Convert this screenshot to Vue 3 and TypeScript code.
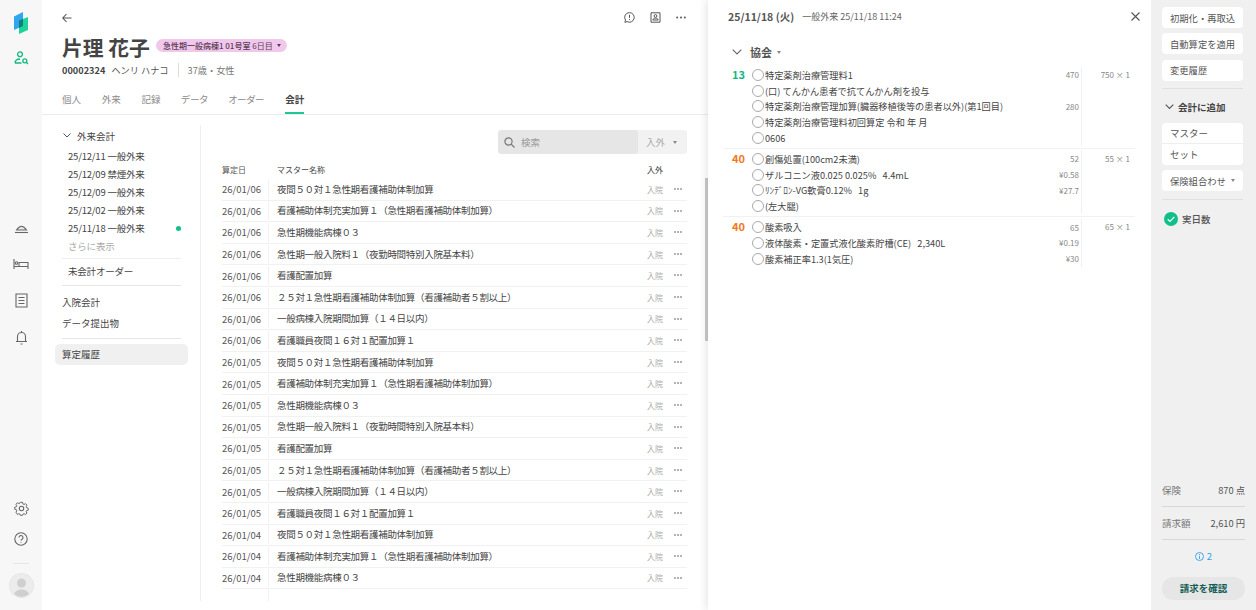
<script setup lang="ts">
const tabs = ['個人', '外来', '記録', 'データ', 'オーダー', '会計']
const visits = ['25/12/11 一般外来', '25/12/09 禁煙外来', '25/12/09 一般外来', '25/12/02 一般外来', '25/11/18 一般外来']
const names = [
  '夜間５０対１急性期看護補助体制加算',
  '看護補助体制充実加算１（急性期看護補助体制加算）',
  '急性期機能病棟０３',
  '急性期一般入院料１（夜勤時間特別入院基本料）',
  '看護配置加算',
  '２５対１急性期看護補助体制加算（看護補助者５割以上）',
  '一般病棟入院期間加算（１４日以内）',
  '看護職員夜間１６対１配置加算１',
]
const rows: { d: string; n: string }[] = [
  ...names.map((n) => ({ d: '26/01/06', n })),
  ...names.map((n) => ({ d: '26/01/05', n })),
  ...names.slice(0, 3).map((n) => ({ d: '26/01/04', n })),
]
interface Line { t: string; p?: string }
const groups: { num: string; color: string; total: string; lines: Line[] }[] = [
  { num: '13', color: '#10b981', total: '750 × 1', lines: [
    { t: '特定薬剤治療管理料1', p: '470' },
    { t: '(口) てんかん患者で抗てんかん剤を投与' },
    { t: '特定薬剤治療管理加算(臓器移植後等の患者以外)(第1回目)', p: '280' },
    { t: '特定薬剤治療管理料初回算定 令和 年 月' },
    { t: '0606' },
  ] },
  { num: '40', color: '#f07a1a', total: '55 × 1', lines: [
    { t: '創傷処置(100cm2未満)', p: '52' },
    { t: 'ザルコニン液0.025 0.025%   4.4mL', p: '¥0.58' },
    { t: 'ﾘﾝﾃﾞﾛﾝ-VG軟膏0.12%   1g', p: '¥27.7' },
    { t: '(左大腿)' },
  ] },
  { num: '40', color: '#f07a1a', total: '65 × 1', lines: [
    { t: '酸素吸入', p: '65' },
    { t: '液体酸素・定置式液化酸素貯槽(CE)   2,340L', p: '¥0.19' },
    { t: '酸素補正率1.3(1気圧)', p: '¥30' },
  ] },
]
</script>

<template>
  <div class="app">
    <aside class="rail">
      <svg class="logo" width="14" height="22" viewBox="0 0 14 22">
        <path d="M0 4.500 9 0v14l-9 4z" fill="#2fa6f2" />
        <path d="M5 8.500 14 5v13l-9 4z" fill="#1fd39c" />
        <path d="M5 8.500 9 6.900V14l-4 2z" fill="#137f78" />
      </svg>
      <svg class="r-patient" width="15" height="14" viewBox="0 0 15 14" fill="none" stroke="#10b981" stroke-width="1.300">
        <circle cx="6" cy="3.300" r="2.400" />
        <path d="M1 12c0-2.500 2-4 5-4M1 12h6.500" />
        <circle cx="10.800" cy="9.800" r="2" />
        <path d="M12.300 11.300l1.700 1.700" />
      </svg>
      <div class="r-mid">
        <svg width="15" height="12" viewBox="0 0 15 12" fill="none" stroke="#666" stroke-width="1.100"><path d="M2.500 8Q7.500 .5 12.500 8z" fill="#e8e8e8" /><path d="M1 10.500h13" /></svg>
        <svg width="16" height="12" viewBox="0 0 16 12" fill="none" stroke="#666" stroke-width="1.100"><path d="M1 1v10M1 8.500h14M15 11V4.500H6v4" /><circle cx="3.500" cy="5" r="1.300" /></svg>
        <svg width="13" height="15" viewBox="0 0 13 15" fill="none" stroke="#666" stroke-width="1.100"><path d="M1 1h11v13H1zM3.500 4.500h6M3.500 7.500h6M3.500 10.500h6" /></svg>
        <svg width="13" height="15" viewBox="0 0 13 15" fill="none" stroke="#666" stroke-width="1.100"><path d="M2.500 11V6.500a4 4 0 0 1 8 0V11M1 11.500h11M5.500 14h2M6.500 1v1.500" /></svg>
      </div>
      <div class="r-bottom">
        <svg width="15" height="15" viewBox="0 0 15 15" fill="none" stroke="#666" stroke-width="1.100"><circle cx="7.500" cy="7.500" r="2.200" /><path d="M6.300 1h2.400l.4 1.800 1.300.6 1.600-.9 1.600 1.700-.9 1.500.5 1.300 1.800.5v2.300l-1.800.4-.5 1.300.9 1.600-1.700 1.500-1.500-.9-1.300.5-.4 1.300H6.300l-.4-1.300-1.300-.5-1.500.9L1.400 12l.9-1.600-.5-1.300L0 8.700V6.500l1.800-.5.5-1.300-.9-1.500L3 1.500l1.600.9 1.300-.6z" transform="translate(.7 .4) scale(.9)" /></svg>
        <svg class="q" width="14" height="14" viewBox="0 0 14 14" fill="none" stroke="#666" stroke-width="1.100"><circle cx="7" cy="7" r="6.200" /><path d="M5 5.500a2 2 0 1 1 3.100 1.700c-.7.500-1.100.8-1.100 1.600M7 10v.8" /></svg>
        <div class="r-sep"></div>
        <div class="avatar">
          <svg width="23" height="23" viewBox="0 0 23 23"><circle cx="11.500" cy="9" r="4.500" fill="#cfcfcf" /><path d="M4 20c1-3 4-4.500 7.500-4.500S18 17 19 20a11 11 0 0 1-15 0z" fill="#cfcfcf" /></svg>
        </div>
      </div>
    </aside>

    <main class="main">
      <header class="head">
        <div class="top-row">
          <svg width="10" height="10" viewBox="0 0 10 10" fill="none" stroke="#555" stroke-width="1.100"><path d="M9.500 5H.8M4.500 1 .8 5l3.700 4" /></svg>
          <div class="top-icons">
            <svg width="11" height="11" viewBox="0 0 11 11" fill="none" stroke="#555" stroke-width="1"><path d="M5.500.6a4.800 4.800 0 1 1-2.400 9L.9 10.300l.6-2.200A4.800 4.800 0 0 1 5.500.6z" /><path d="M5.500 2.800v3.100M5.500 7.100v.9" /></svg>
            <svg width="11" height="11" viewBox="0 0 11 11" fill="none" stroke="#555" stroke-width="1"><path d="M1 .8h9v9.400H1zM2.800 8c.3-1.300 1.300-1.800 2.700-1.800S7.900 6.700 8.200 8z" /><circle cx="5.500" cy="4" r="1.400" /></svg>
            <svg width="10" height="3" viewBox="0 0 10 3" fill="#555"><circle cx="1.200" cy="1.500" r="1" /><circle cx="5" cy="1.500" r="1" /><circle cx="8.800" cy="1.500" r="1" /></svg>
          </div>
        </div>
        <div class="name-row">
          <h1>片理 花子</h1>
          <span class="badge"><strong>急性期一般病棟1 01号室</strong> 6日目<i class="caret dark"></i></span>
        </div>
        <div class="id-row"><b>00002324</b><span>ヘンリ ハナコ</span><span class="age">37歳・女性</span></div>
        <nav class="tabs">
          <span v-for="t in tabs" :key="t" :class="{ on: t === '会計' }">{{ t }}</span>
        </nav>
      </header>

      <div class="body">
        <div class="nav">
          <div class="nav-title"><svg width="8" height="5" viewBox="0 0 8 5" fill="none" stroke="#555"><path d="M.5.500 4 4 7.500.500" /></svg>外来会計</div>
          <div class="visit" v-for="(v, i) in visits" :key="v">{{ v }}<i v-if="i === 4" class="dot"></i></div>
          <div class="visit more">さらに表示</div>
          <div class="visit unpaid">未会計オーダー</div>
          <div class="nav-rule"></div>
          <div class="nav-link first">入院会計</div>
          <div class="nav-link">データ提出物</div>
          <div class="nav-rule second"></div>
          <div class="nav-active">算定履歴</div>
        </div>

        <section class="list">
          <div class="search-row">
            <div class="search">
              <svg width="11" height="11" viewBox="0 0 11 11" fill="none" stroke="#777" stroke-width="1.200"><circle cx="4.500" cy="4.500" r="3.600" /><path d="M7.200 7.200 10.500 10.500" /></svg>
              検索
            </div>
            <div class="filter">入外<i class="caret"></i></div>
          </div>
          <div class="t-head"><span class="c-date">算定日</span><span class="c-name">マスター名称</span><span class="c-io">入外</span></div>
          <div class="t-row" v-for="(r, i) in rows" :key="i">
            <span class="c-date">{{ r.d }}</span>
            <span class="c-name cell">{{ r.n }}</span>
            <span class="c-io io">入院</span>
            <svg class="dots" width="8" height="2" viewBox="0 0 8 2" fill="#555"><circle cx="1" cy="1" r=".8" /><circle cx="4" cy="1" r=".8" /><circle cx="7" cy="1" r=".8" /></svg>
          </div>
          <div class="t-row"><span class="c-date"></span><span class="c-name cell"></span></div>
        </section>
      </div>
      <div class="scroll"></div>
    </main>

    <section class="detail">
      <header class="d-head">
        <b>25/11/18 (火)</b><span>一般外来 25/11/18 11:24</span>
        <svg class="close" width="9" height="9" viewBox="0 0 9 9" fill="none" stroke="#555" stroke-width="1.100"><path d="M.5.500l8 8M8.500.500l-8 8" /></svg>
      </header>
      <div class="d-title">
        <svg width="10" height="6" viewBox="0 0 10 6" fill="none" stroke="#666" stroke-width="1.100"><path d="M.7.700 5 5 9.300.700" /></svg>
        <b>協会</b><i class="caret"></i>
      </div>
      <div class="grp" v-for="(g, gi) in groups" :key="gi">
        <div class="g-num" :style="{ color: g.color }">{{ g.num }}</div>
        <div class="g-lines">
          <div class="g-line" v-for="l in g.lines" :key="l.t">
            <i class="radio"></i><span class="g-text">{{ l.t }}</span><span class="g-p">{{ l.p }}</span>
          </div>
        </div>
        <div class="g-total">{{ g.total }}</div>
      </div>
    </section>

    <aside class="side">
      <button>初期化・再取込</button>
      <button>自動算定を適用</button>
      <button>変更履歴</button>
      <div class="s-rule"></div>
      <div class="s-add"><svg width="9" height="6" viewBox="0 0 9 6" fill="none" stroke="#555" stroke-width="1.100"><path d="M.7.700 4.500 4.500 8.300.700" /></svg>会計に追加</div>
      <div class="s-stack"><span>マスター</span><span>セット</span></div>
      <button class="s-ins">保険組合わせ<i class="caret"></i></button>
      <div class="s-rule"></div>
      <div class="s-check">
        <svg width="14" height="14" viewBox="0 0 14 14"><circle cx="7" cy="7" r="7" fill="#10bf8a" /><path d="M3.700 7.200 6 9.400l4.300-4.600" fill="none" stroke="#fff" stroke-width="1.200" /></svg>
        実日数
      </div>
      <div class="s-foot">
        <div class="s-sum"><span>保険</span><b>870 点</b></div>
        <div class="s-sum"><span>請求額</span><b>2,610 円</b></div>
        <div class="s-info">
          <svg width="9" height="9" viewBox="0 0 9 9" fill="none" stroke="#2aa4ee" stroke-width=".9"><circle cx="4.500" cy="4.500" r="4" /><path d="M4.500 3.800V7M4.500 2v1" /></svg>
          2
        </div>
        <div class="s-confirm">請求を確認</div>
      </div>
    </aside>
  </div>
</template>

<style>
body { margin: 0; background: #fff; }
</style>

<style scoped>
.app {
  display: flex;
  width: 1256px;
  height: 610px;
  overflow: hidden;
  font-family: "Noto Sans CJK JP", "Noto Sans", sans-serif;
  color: #444;
  font-size: 9.5px;
}
.rail {
  width: 42px;
  flex: none;
  background: #f7f7f7;
  display: flex;
  flex-direction: column;
  align-items: center;
  padding-top: 12px;
  box-sizing: border-box;
}
.logo { flex: none; margin-right: 1px; }
.r-patient { margin-top: 17px; }
.r-mid {
  display: grid;
  grid-auto-rows: 36.500px;
  justify-items: center;
  align-items: center;
  margin-top: 144.500px;
}
.r-bottom {
  margin-top: auto;
  padding-bottom: 13px;
  display: flex;
  flex-direction: column;
  align-items: center;
}
.q { margin-top: 16px; }
.r-sep { width: 16px; height: 1px; background: #e6e6e6; margin: 17px 0 10px; }
.avatar {
  width: 23px;
  height: 23px;
  border-radius: 50%;
  background: #ececec;
  box-shadow: 0 0 0 1px #e6e6e6;
  overflow: hidden;
}
.avatar svg { display: block; }
.main {
  width: 666px;
  flex: none;
  position: relative;
  display: flex;
  flex-direction: column;
}
.scroll {
  position: absolute;
  right: 0;
  top: 178px;
  width: 3px;
  height: 163px;
  background: #c9c9c9;
}
.head {
  height: 115px;
  box-sizing: border-box;
  border-bottom: 1px solid #ececec;
  padding: 12px 22px 0 20px;
  flex: none;
}
.top-row { display: flex; align-items: center; justify-content: space-between; height: 11px; }
.top-icons { display: flex; align-items: center; gap: 15px; }
.name-row { display: flex; align-items: center; gap: 6px; margin-top: 9px; height: 30px; }
h1 { font-size: 20.800px; font-weight: 700; margin: 0; color: #444; line-height: 30px; }
.badge {
  background: #f1c8ec;
  color: #5a3d55;
  font-size: 8px;
  height: 13px;
  line-height: 13px;
  border-radius: 7px;
  padding: 0 6px 0 7px;
  display: flex;
  align-items: center;
  white-space: pre;
  margin-top: -3px;
}
.badge strong { font-weight: 500; }
.caret {
  display: inline-block;
  width: 0;
  height: 0;
  border-left: 2.500px solid transparent;
  border-right: 2.500px solid transparent;
  border-top: 3px solid #888;
  margin-left: 8px;
}
.caret.dark { border-top-color: #5a3d55; margin-left: 4px; }
.id-row { display: flex; align-items: center; margin-top: 1px; height: 14px; font-size: 9.200px; gap: 6px; color: #555; }
.id-row b { color: #444; }
.age { border-left: 1px solid #ddd; padding-left: 9px; margin-left: 3px; color: #777; }
.tabs { display: flex; gap: 20.700px; margin-top: 14.500px; font-feature-settings: "palt"; }
.tabs span { font-size: 9.500px; line-height: 15px; height: 22.500px; color: #8a8a8a; box-sizing: border-box; }
.tabs .on { color: #444; font-weight: 700; border-bottom: 2px solid #1ec796; }
.body { flex: 1; display: flex; min-height: 0; padding-top: 10px; }
.nav {
  width: 159px;
  flex: none;
  box-sizing: border-box;
  border-right: 1px solid #efefef;
  height: 476px;
  padding: 0 12px;
}
.nav-title { display: flex; align-items: center; gap: 6px; height: 21.500px; padding-left: 9px; color: #444; }
.visit {
  height: 18.200px;
  line-height: 18.200px;
  padding-left: 14px;
  margin-right: 7px;
  position: relative;
  color: #444;
  letter-spacing: -.2px;
}
.dot {
  position: absolute;
  right: 0;
  top: 7px;
  width: 5px;
  height: 5px;
  border-radius: 50%;
  background: #10bf8a;
}
.visit.more { color: #aaa; }
.visit.unpaid { border-top: 1px solid #eee; margin-top: 2px; margin-left: 8px; padding-left: 6px; height: 25px; line-height: 25px; }
.nav-rule { height: 1px; background: #e5e5e5; margin: 1.500px 7px 0 8px; }
.nav-link { height: 21px; line-height: 21px; padding-left: 8px; }
.nav-link.first { margin-top: 5.500px; }
.nav-rule.second { margin-top: 4.500px; }
.nav-active {
  background: #f0f0f0;
  height: 21px;
  line-height: 21px;
  margin: 5px 0 0 1px;
  padding-left: 7px;
  border-radius: 5px;
  width: 133px;
  box-sizing: border-box;
}
.list { width: 465px; margin-left: 21px; flex: none; height: 476px; overflow: hidden; }
.search-row { display: flex; height: 24px; margin: 5px 0 0 276px; border-radius: 3px; overflow: hidden; background: #f2f2f2; width: 189px; }
.search {
  width: 140px;
  background: #e6e6e6;
  border-radius: 3px;
  display: flex;
  align-items: center;
  gap: 6px;
  padding-left: 6px;
  box-sizing: border-box;
  color: #999;
}
.filter { flex: 1; display: flex; align-items: center; padding-left: 8px; color: #aaa; }
.t-head { display: flex; align-items: center; height: 19px; padding-bottom: 1px; box-sizing: border-box; margin-top: 6px; font-size: 8px; color: #555; }
.t-head .c-name { padding-left: 9px; }
.t-row { display: flex; align-items: center; height: 21.600px; box-sizing: border-box; border-bottom: 1px solid #f1f1f1; position: relative; }
.c-date { width: 46px; flex: none; }
.t-row .c-date { color: #555; }
.c-name { flex: 1; color: #444; white-space: nowrap; overflow: hidden; }
.t-row .cell { border-left: 1px solid #f1f1f1; padding-left: 8px; height: 19px; line-height: 19px; letter-spacing: -.3px; }
.c-io { width: 40px; flex: none; }
.t-head .c-io { color: #333; }
.io { font-size: 8px; color: #aaa; }
.dots { position: absolute; right: 5px; top: 9px; }
.detail {
  width: 443px;
  flex: none;
  position: relative;
  box-shadow: -2px 0 8px rgba(0, 0, 0, .1);
  box-sizing: border-box;
  padding: 0 16px 0 15px;
  z-index: 1;
  background: #fff;
}
.d-head { display: flex; align-items: center; gap: 8px; height: 33px; padding-left: 5px; font-size: 9px; color: #666; position: relative; }
.d-head b { font-size: 10.500px; color: #555; }
.close { position: absolute; right: -5px; top: 12px; }
.d-title { display: flex; align-items: center; gap: 8px; margin: 9px 0 3px 9px; height: 20px; }
.d-title b { font-size: 11px; color: #555; }
.d-title .caret { margin-left: -3px; }
.grp { display: flex; border-bottom: 1px solid #f1f1f1; padding: 2px 0; }
.grp:last-child { border-bottom: 0; }
.g-num { width: 22px; text-align: right; flex: none; font-size: 11px; font-weight: 700; line-height: 15.800px; }
.g-lines { flex: 1; border-right: 1px solid #f0f0f0; padding: 0 2px 0 7px; }
.g-line { display: flex; align-items: center; height: 15.800px; white-space: pre; }
.radio { width: 10px; height: 10px; border: 1px solid #aaa; border-radius: 50%; margin-right: 1px; flex: none; }
.g-text { flex: 1; font-size: 9.200px; color: #444; }
.g-p { font-size: 8px; color: #888; }
.g-total { width: 53px; box-sizing: border-box; padding-right: 5px; flex: none; text-align: right; font-size: 8px; color: #888; line-height: 15.800px; }
.side {
  flex: 1;
  background: #f0f0f0;
  padding: 7px 13px 0 11px;
  display: flex;
  flex-direction: column;
  position: relative;
  z-index: 2;
}
button {
  font: inherit;
  font-size: 9.300px;
  color: #555;
  background: #fff;
  border: 0;
  border-radius: 4px;
  height: 21px;
  padding: 0 8px;
  text-align: left;
  margin-bottom: 5.300px;
  display: flex;
  align-items: center;
  flex: none;
  justify-content: space-between;
  white-space: nowrap;
  overflow: hidden;
  width: 81px;
  box-sizing: border-box;
}
.s-rule { height: 1px; background: #e0e0e0; margin-top: 2px; flex: none; }
.s-add { display: flex; align-items: center; gap: 4px; font-weight: 700; height: 28px; margin: 4px 0 2px; color: #444; padding-left: 3px; }
.s-stack { background: #fff; border-radius: 4px; display: flex; flex-direction: column; margin-bottom: 5.500px; }
.s-stack span { height: 20.500px; line-height: 20.500px; padding-left: 8px; color: #555; }
.s-stack span:first-child { border-bottom: 1px solid #eee; }
.s-ins .caret { margin-left: 0; }
.s-check { display: flex; align-items: center; gap: 4px; margin-top: 12px; padding-left: 2px; font-weight: 500; color: #555; }
.s-foot { margin-top: auto; padding-bottom: 10px; margin-right: -2px; }
.s-sum { display: flex; justify-content: space-between; align-items: center; height: 32px; border-bottom: 1px solid #d8d8d8; color: #777; }
.s-sum b { font-weight: 400; color: #555; font-size: 9.300px; }
.s-info { display: flex; align-items: center; justify-content: center; gap: 3px; height: 32px; color: #2aa4ee; }
.s-confirm { height: 23px; line-height: 23px; border-radius: 12px; background: #e6e6e6; text-align: center; font-weight: 700; color: #155e58; font-size: 9.500px; margin-top: 5px; }
</style>
